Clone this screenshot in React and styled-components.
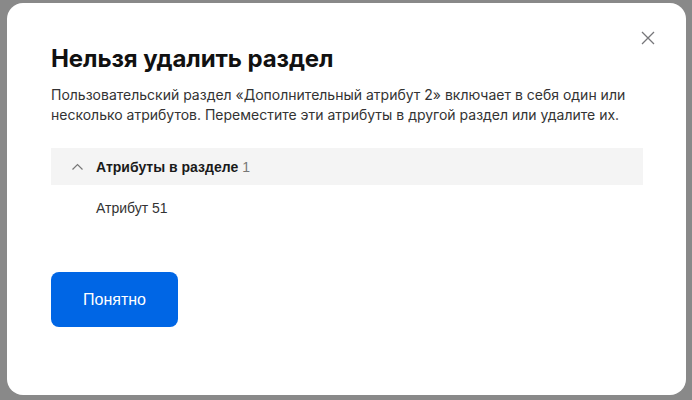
import React from 'react'
import styled, { createGlobalStyle } from 'styled-components'

const GlobalStyle = createGlobalStyle`
  html, body {
    margin: 0;
    padding: 0;
    height: 100%;
    background: #898989;
  }
  #root {
    height: 100%;
  }
`;

const Backdrop = styled.div`
  box-sizing: border-box;
  height: 400px;
  padding: 3px 6px 5px 7px;
  display: flex;
`;

const Dialog = styled.div`
  position: relative;
  box-sizing: border-box;
  flex: 1;
  background: #fff;
  border-radius: 16px;
  padding: 40px 43px 0 44px;
  display: flex;
  flex-direction: column;
  align-items: flex-start;
  font-family: Inter, "Noto Sans", sans-serif;
`;

const CloseButton = styled.button`
  position: absolute;
  top: 22px;
  right: 25px;
  width: 26px;
  height: 26px;
  padding: 0;
  border: 0;
  background: none;
  display: flex;
  align-items: center;
  justify-content: center;
  color: #76767a;
  cursor: pointer;
`;

const Title = styled.h2`
  margin: 0;
  font-size: 24px;
  line-height: 32px;
  font-weight: 700;
  color: #111;
  letter-spacing: -0.1px;
`;

const Text = styled.p`
  margin: 10px 0 0;
  font-size: 14px;
  line-height: 20px;
  color: #333;
`;

const Section = styled.section`
  align-self: stretch;
  margin-top: 23px;
  font-family: "Liberation Sans", Arial, sans-serif;
`;

const SectionHeader = styled.div`
  height: 37px;
  display: flex;
  align-items: center;
  gap: 13px;
  padding-left: 21px;
  background: #f4f4f4;
  font-size: 14px;
  font-weight: 700;
  color: #1a1a1a;
`;

const Count = styled.span`
  font-weight: 400;
  color: #777;
  margin-left: 4px;
`;

const Item = styled.div`
  margin-top: 13px;
  padding-left: 45px;
  font-size: 14px;
  line-height: 20px;
  color: #333;
`;

const PrimaryButton = styled.button`
  margin-top: 54px;
  width: 127px;
  height: 55px;
  border: 0;
  border-radius: 8px;
  background: #0066e5;
  color: #fff;
  font-family: "Liberation Sans", Arial, sans-serif;
  font-size: 16px;
  cursor: pointer;
`;

export default function App() {
  return <>
    <GlobalStyle />
    <Backdrop>
      <Dialog>
        <CloseButton aria-label="Закрыть">
          <svg width="14" height="14" viewBox="0 0 14 14" fill="none" stroke="currentColor" strokeWidth="1.3">
            <path d="M1 1l12 12M13 1L1 13" />
          </svg>
        </CloseButton>
        <Title>Нельзя удалить раздел</Title>
        <Text>
          Пользовательский раздел «Дополнительный атрибут 2» включает в себя один или
          несколько атрибутов. Переместите эти атрибуты в другой раздел или удалите их.
        </Text>
        <Section>
          <SectionHeader>
            <svg width="11" height="7" viewBox="0 0 11 7" fill="none" stroke="#777" strokeWidth="1.2">
              <path d="M0.5 6.5l5-5 5 5" />
            </svg>
            <span>Атрибуты в разделе<Count>1</Count></span>
          </SectionHeader>
          <Item>Атрибут 51</Item>
        </Section>
        <PrimaryButton>Понятно</PrimaryButton>
      </Dialog>
    </Backdrop>
  </>
}
